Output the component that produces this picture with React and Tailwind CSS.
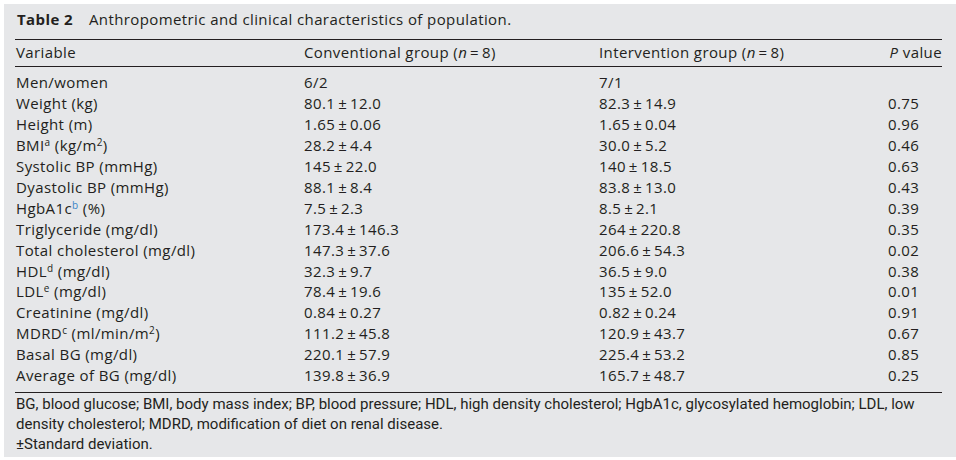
import React from 'react';

const rows = [
  { name: 'Men/women', conv: '6/2', int: '7/1', p: '' },
  { name: 'Weight (kg)', conv: '80.1\u2009±\u200912.0', int: '82.3\u2009±\u200914.9', p: '0.75' },
  { name: 'Height (m)', conv: '1.65\u2009±\u20090.06', int: '1.65\u2009±\u20090.04', p: '0.96' },
  { name: <>BMI<sup>a</sup> (kg/m<sup>2</sup>)</>, conv: '28.2\u2009±\u20094.4', int: '30.0\u2009±\u20095.2', p: '0.46' },
  { name: 'Systolic BP (mmHg)', conv: '145\u2009±\u200922.0', int: '140\u2009±\u200918.5', p: '0.63' },
  { name: 'Dyastolic BP (mmHg)', conv: '88.1\u2009±\u20098.4', int: '83.8\u2009±\u200913.0', p: '0.43' },
  { name: <>HgbA1c<sup className="text-[#3a86c8]">b</sup> (%)</>, conv: '7.5\u2009±\u20092.3', int: '8.5\u2009±\u20092.1', p: '0.39' },
  { name: 'Triglyceride (mg/dl)', conv: '173.4\u2009±\u2009146.3', int: '264\u2009±\u2009220.8', p: '0.35' },
  { name: 'Total cholesterol (mg/dl)', conv: '147.3\u2009±\u200937.6', int: '206.6\u2009±\u200954.3', p: '0.02' },
  { name: <>HDL<sup>d</sup> (mg/dl)</>, conv: '32.3\u2009±\u20099.7', int: '36.5\u2009±\u20099.0', p: '0.38' },
  { name: <>LDL<sup>e</sup> (mg/dl)</>, conv: '78.4\u2009±\u200919.6', int: '135\u2009±\u200952.0', p: '0.01' },
  { name: 'Creatinine (mg/dl)', conv: '0.84\u2009±\u20090.27', int: '0.82\u2009±\u20090.24', p: '0.91' },
  { name: <>MDRD<sup>c</sup> (ml/min/m<sup>2</sup>)</>, conv: '111.2\u2009±\u200945.8', int: '120.9\u2009±\u200943.7', p: '0.67' },
  { name: 'Basal BG (mg/dl)', conv: '220.1\u2009±\u200957.9', int: '225.4\u2009±\u200953.2', p: '0.85' },
  { name: 'Average of BG (mg/dl)', conv: '139.8\u2009±\u200936.9', int: '165.7\u2009±\u200948.7', p: '0.25' },
];

const Row = ({ children }) => (
  <div className="grid grid-cols-[288px_295px_1fr_56px] leading-[20.95px]">{children}</div>
);

export default function App() {
  return (
    <div className="bg-white w-[956px] h-[460px] pt-1 pl-1">
      <div
        className="bg-[#e6e7e9] h-[453px] pt-[5px] pl-[11px] pr-[14px] text-[#231f20] text-[15px] tracking-[0.4px]"
        style={{ fontFamily: '"Open Sans", "DejaVu Sans", sans-serif' }}
      >
        <div className="pl-[2px] leading-[21px]">
          <span className="font-bold">Table 2</span>
          <span className="ml-[16px]">Anthropometric and clinical characteristics of population.</span>
        </div>

        <div className="mt-[9px] border-t border-[#231f20]" />
        <div className="pl-[1px] pt-[2px] pb-[3px] border-b border-[#231f20]">
          <Row>
            <div>Variable</div>
            <div>Conventional group (<i>n</i>&thinsp;=&thinsp;8)</div>
            <div>Intervention group (<i>n</i>&thinsp;=&thinsp;8)</div>
            <div className="text-right whitespace-nowrap"><i>P</i> value</div>
          </Row>
        </div>

        <div className="pl-[1px] pt-[5px] pb-[6px] border-b border-[#231f20] [&_sup]:text-[10px] [&_sup]:top-[-5px]">
          {rows.map((r, i) => (
            <Row key={i}>
              <div>{r.name}</div>
              <div>{r.conv}</div>
              <div>{r.int}</div>
              <div className="pl-[2px]">{r.p}</div>
            </Row>
          ))}
        </div>

        <div
          className="pl-[1px] pt-[2px] text-[15px] tracking-[0px] leading-[19.7px] whitespace-nowrap"
          style={{ fontFamily: '"Liberation Sans Narrow", "Roboto", sans-serif' }}
        >
          <p>
            BG, blood glucose; BMI, body mass index; BP, blood pressure; HDL, high density cholesterol; HgbA1c, glycosylated hemoglobin; LDL, low
            <br />
            density cholesterol; MDRD, modification of diet on renal disease.
          </p>
          <p>±Standard deviation.</p>
        </div>
      </div>
    </div>
  );
}
